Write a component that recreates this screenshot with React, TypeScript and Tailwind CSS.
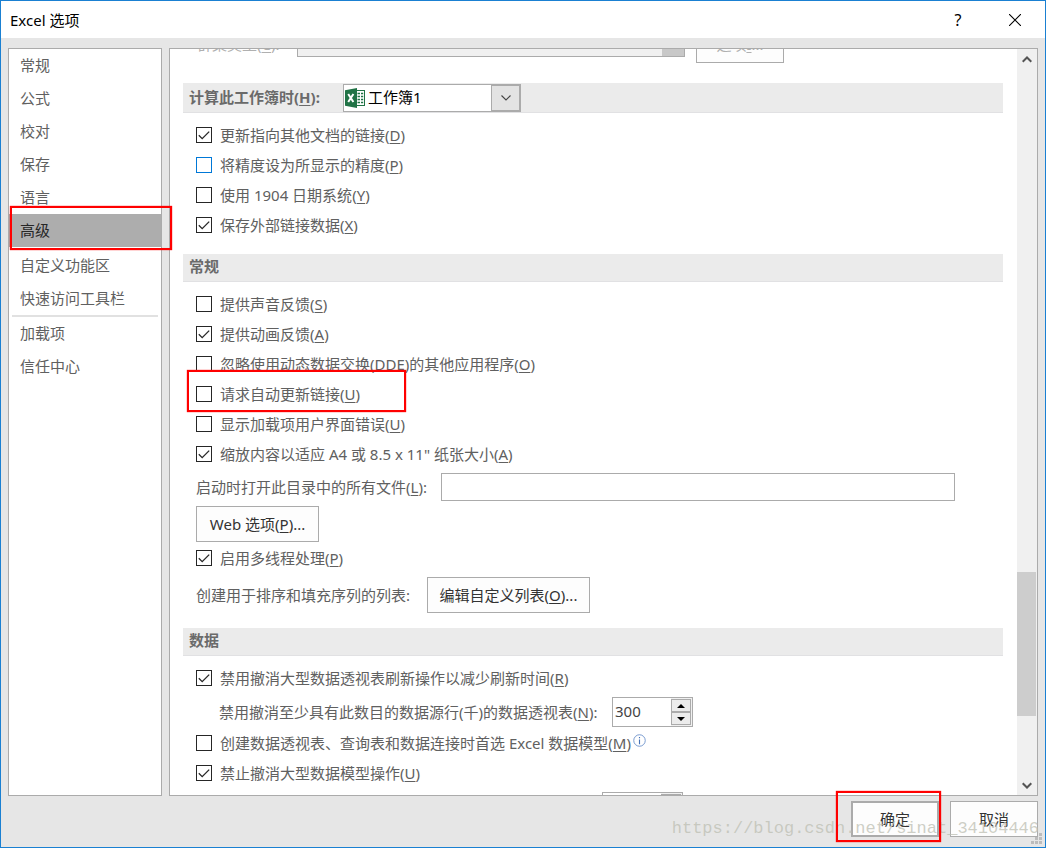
import type { ReactNode } from 'react';

const NAV_MAIN = ['常规', '公式', '校对', '保存', '语言', '高级'];
const NAV_CUSTOM = ['自定义功能区', '快速访问工具栏'];
const NAV_EXTRA = ['加载项', '信任中心'];

/** Access key shown after a label, e.g. "(D)". */
function Key({ k }: { k: string }) {
  return (
    <>
      (<span className="underline underline-offset-2">{k}</span>)
    </>
  );
}

function Check({ on, focus, accel, children }: { on?: boolean; focus?: boolean; accel: string; children: ReactNode }) {
  return (
    <label className="flex h-[30px] items-center gap-2 pl-[13px]">
      <span className="grid size-4 shrink-0">
        <input
          type="checkbox"
          defaultChecked={on}
          className={
            focus
              ? 'peer col-start-1 row-start-1 size-4 appearance-none border border-[#0078d7] bg-white'
              : 'peer col-start-1 row-start-1 size-4 appearance-none border border-[#262626] bg-white'
          }
        />
        <svg
          viewBox="0 0 16 16"
          className="pointer-events-none col-start-1 row-start-1 size-4 opacity-0 peer-checked:opacity-100"
          fill="none"
          stroke="#262626"
          strokeWidth="1.3"
        >
          <path d="M2.8 8.2 L6.2 11.6 L13.2 4.6" />
        </svg>
      </span>
      <span className="whitespace-nowrap">
        {children}
        <Key k={accel} />
      </span>
    </label>
  );
}

function Heading({ children }: { children: ReactNode }) {
  return (
    <h2 className="mt-[14px] mb-[7px] flex h-7 items-center border-b border-[#e1e1e3] bg-[#ebebeb] px-[6px] pb-1 font-bold text-[#6a6a6a]">
      {children}
    </h2>
  );
}

function NavItem({ text }: { text: string }) {
  const selected = text === '高级';
  return (
    <li>
      <button
        type="button"
        className={
          selected
            ? 'block h-[33px] w-full bg-[#adadad] pb-[2px] pl-[11px] text-left text-[#262626]'
            : 'block h-[33px] w-full pb-[2px] pl-[11px] text-left'
        }
      >
        {text}
      </button>
    </li>
  );
}

function Spinner({ id, value }: { id: string; value: string }) {
  return (
    <span className="flex h-[30px] w-[81px] shrink-0 border border-[#ababab] bg-white">
      <input id={id} defaultValue={value} className="w-0 min-w-0 flex-1 pb-[3px] pl-[2px] text-[#444444] outline-none" />
      <span className="flex w-[21px] flex-col bg-[#f0f0f0] py-px pr-px">
        <button type="button" aria-label="增加" className="flex flex-1 items-center justify-center border border-[#ababab] bg-[#ececec]">
          <svg viewBox="0 0 8 4" className="h-1 w-2">
            <path d="M0 4 L4 0 L8 4 Z" fill="#000" />
          </svg>
        </button>
        <button type="button" aria-label="减少" className="flex flex-1 items-center justify-center border border-[#ababab] bg-[#ececec]">
          <svg viewBox="0 0 8 4" className="h-1 w-2">
            <path d="M0 0 L4 4 L8 0 Z" fill="#000" />
          </svg>
        </button>
      </span>
    </span>
  );
}

function ExcelIcon() {
  return (
    <svg viewBox="0 0 20 20" className="size-5 shrink-0">
      <rect x="10" y="2.5" width="9.5" height="15" fill="#fff" stroke="#217346" />
      <path d="M12.5 5.5H15M12.5 8.5H15M12.5 11.5H15M12.5 14.5H15M16 5.5h2.2M16 8.5h2.2M16 11.5h2.2M16 14.5h2.2" stroke="#217346" strokeWidth="1.5" />
      <path d="M0 2.2 L12 0 V20 L0 17.8 Z" fill="#217346" />
      <path d="M3.2 6 L8.4 14 M8.4 6 L3.2 14" stroke="#fff" strokeWidth="2" />
    </svg>
  );
}

export default function App() {
  return (
    <div className="relative flex h-screen flex-col border border-[#1a80d2] bg-[#e6e6e6] font-['Noto_Sans','Noto_Sans_CJK_SC',sans-serif] text-[15px] leading-5 text-[#606060]">
      <header className="flex h-[37px] shrink-0 items-center bg-white pl-[9px] text-black">
        <h1 className="flex-1">Excel 选项</h1>
        <button type="button" aria-label="帮助" className="h-full w-[54px] text-[16px]">
          ?
        </button>
        <button type="button" aria-label="关闭" className="flex h-full w-[60px] items-center justify-center">
          <svg viewBox="0 0 12 12" className="size-3" stroke="#000" strokeWidth="1.1">
            <path d="M0 0 L12 12 M12 0 L0 12" />
          </svg>
        </button>
      </header>

      <main className="flex min-h-0 flex-1 gap-[7px] px-[7px] pt-[10px]">
        <nav className="w-[154px] shrink-0 border border-[#ababab] bg-white">
          <ul>
            {NAV_MAIN.map((t) => (
              <NavItem key={t} text={t} />
            ))}
          </ul>
          <ul className="mt-[2px]">
            {NAV_CUSTOM.map((t) => (
              <NavItem key={t} text={t} />
            ))}
          </ul>
          <hr className="mx-[3px] border-t-2 border-[#e1e1e1]" />
          <ul>
            {NAV_EXTRA.map((t) => (
              <NavItem key={t} text={t} />
            ))}
          </ul>
        </nav>

        <section className="flex min-w-0 flex-1 border border-[#ababab] bg-white">
          <div className="min-w-0 flex-1 overflow-hidden pr-[14px] pl-[13px]">
            <div className="-mt-[22px] flex h-9 items-start text-[#b0b0b0]">
              <label htmlFor="cluster" className="w-[114px] pt-[7px] pl-[14px]">
                群集类型
                <Key k="C" />:
              </label>
              <span className="flex h-[30px] w-[388px] border border-[#ababab] bg-[#f0f0f0]">
                <select id="cluster" disabled className="flex-1 appearance-none" />
                <span className="w-[22px] bg-[#c8c8c8]" />
              </span>
              <button type="button" disabled className="ml-[11px] h-9 w-[88px] border border-[#ababab] bg-[#fdfdfd] pb-[3px]">
                选项<span className="underline underline-offset-2">I</span>...
              </button>
            </div>

            <h2 className="mt-5 mb-[7px] flex h-[30px] items-center border-b border-[#e1e1e3] bg-[#ebebeb] pl-[6px] font-bold text-[#6a6a6a]">
              <label htmlFor="book" className="w-[154px] shrink-0 pb-[2px]">
                计算此工作簿时
                <Key k="H" />:
              </label>
              <span className="flex h-7 w-[178px] items-center border border-[#ababab] bg-white pl-px font-normal text-black">
                <ExcelIcon />
                <select id="book" className="h-full min-w-0 flex-1 appearance-none pb-[2px] pl-[3px] outline-none">
                  <option>工作簿1</option>
                </select>
                <span className="flex h-full w-[29px] items-center justify-center border border-[#ababab] bg-[#e3e3e3]">
                  <svg viewBox="0 0 10 6" className="h-[6px] w-[10px]" fill="none" stroke="#444" strokeWidth="1.1">
                    <path d="M0.5 0.5 L5 5 L9.5 0.5" />
                  </svg>
                </span>
              </span>
            </h2>
            <Check on accel="D">更新指向其他文档的链接</Check>
            <Check focus accel="P">将精度设为所显示的精度</Check>
            <Check accel="Y">使用 1904 日期系统</Check>
            <Check on accel="X">保存外部链接数据</Check>

            <Heading>常规</Heading>
            <Check accel="S">提供声音反馈</Check>
            <Check on accel="A">提供动画反馈</Check>
            <Check accel="O">忽略使用动态数据交换(DDE)的其他应用程序</Check>
            <Check accel="U">请求自动更新链接</Check>
            <Check accel="U">显示加载项用户界面错误</Check>
            <Check on accel="A">缩放内容以适应 A4 或 8.5 x 11" 纸张大小</Check>
            <div className="flex h-9 items-center pr-12 pl-[13px]">
              <label htmlFor="startup" className="w-[245px] shrink-0">
                启动时打开此目录中的所有文件
                <Key k="L" />:
              </label>
              <input id="startup" className="h-7 min-w-0 flex-1 border border-[#ababab] bg-white px-1 outline-none" />
            </div>
            <button type="button" className="my-px ml-[13px] block h-9 w-[123px] border border-[#ababab] bg-[#fdfdfd] text-[#333333]">
              Web 选项
              <Key k="P" />
              ...
            </button>
            <Check on accel="P">启用多线程处理</Check>
            <div className="mt-1 flex items-center pb-px pl-[13px]">
              <span className="w-[231px] shrink-0">创建用于排序和填充序列的列表:</span>
              <button type="button" className="h-9 w-[163px] border border-[#ababab] bg-[#fdfdfd] text-[#333333]">
                编辑自定义列表
                <Key k="O" />
                ...
              </button>
            </div>

            <Heading>数据</Heading>
            <Check on accel="R">禁用撤消大型数据透视表刷新操作以减少刷新时间</Check>
            <div className="flex h-[35px] items-center pt-[3px] pl-9">
              <label htmlFor="undo-rows" className="w-[393px] shrink-0 whitespace-nowrap">
                禁用撤消至少具有此数目的数据源行(千)的数据透视表
                <Key k="N" />:
              </label>
              <Spinner id="undo-rows" value="300" />
            </div>
            <div className="flex">
              <Check accel="M">创建数据透视表、查询表和数据连接时首选 Excel 数据模型</Check>
              <svg viewBox="0 0 14 14" className="mt-[6px] ml-[2px] size-[13px]" fill="none" stroke="#6f94cc">
                <circle cx="7" cy="7" r="6.2" />
                <path d="M7 6 V11 M7 3.2 V4.6" stroke="#4472b8" strokeWidth="1.2" />
              </svg>
            </div>
            <Check on accel="U">禁止撤消大型数据模型操作</Check>
            <div className="mt-1 pl-[419px]">
              <Spinner id="model-size" value="8" />
            </div>
          </div>

          <div className="flex w-[20px] shrink-0 flex-col items-center bg-[#f0f0f0]">
            <button type="button" aria-label="向上滚动" className="flex h-5 w-full items-center justify-center">
              <svg viewBox="0 0 10 7" className="h-[7px] w-[10px]" fill="none" stroke="#555" strokeWidth="2">
                <path d="M0.7 5.8 L5 1.5 L9.3 5.8" />
              </svg>
            </button>
            <div className="flex w-full flex-1 flex-col">
              <div className="flex-[503]" />
              <div className="mr-px flex-[144] bg-[#cdcdcd]" />
              <div className="flex-[59]" />
            </div>
            <button type="button" aria-label="向下滚动" className="flex h-5 w-full items-center justify-center">
              <svg viewBox="0 0 10 7" className="h-[7px] w-[10px]" fill="none" stroke="#555" strokeWidth="2">
                <path d="M0.7 1.2 L5 5.5 L9.3 1.2" />
              </svg>
            </button>
          </div>
        </section>
      </main>

      <footer className="flex h-[51px] shrink-0 items-start justify-end gap-[11px] pt-[5px] pr-[7px] text-[#333333]">
        <button type="button" className="h-9 w-[88px] border-2 border-[#ababab] bg-[#fdfdfd]">
          确定
        </button>
        <button type="button" className="h-9 w-[88px] border border-[#ababab] bg-[#fdfdfd]">
          取消
        </button>
      </footer>

      <svg viewBox="0 0 12 12" className="absolute right-[2px] bottom-[2px] size-3" fill="#bcbcbc">
        <path d="M8 0h3v3h-3zM8 4h3v3h-3zM4 4h3v3h-3zM8 8h3v3h-3zM4 8h3v3h-3zM0 8h3v3h-3z" />
      </svg>
      <div className="pointer-events-none absolute right-[6px] bottom-2 font-['Liberation_Mono',monospace] text-[17px] text-[#bdbfb3]/75">
        https://blog.csdn.net/sinat_34104446
      </div>

      <div className="pointer-events-none absolute top-[205px] left-[9px] h-11 w-[162px] border-2 border-[#ff0000] shadow-[0_0_1px_#ff0000]" />
      <div className="pointer-events-none absolute top-[369px] left-[186px] h-[42px] w-[219px] border-2 border-[#ff0000] shadow-[0_0_1px_#ff0000]" />
      <div className="pointer-events-none absolute right-[104px] bottom-[5px] h-[51px] w-[105px] border-2 border-[#ff0000] shadow-[0_0_1px_#ff0000]" />
    </div>
  );
}
